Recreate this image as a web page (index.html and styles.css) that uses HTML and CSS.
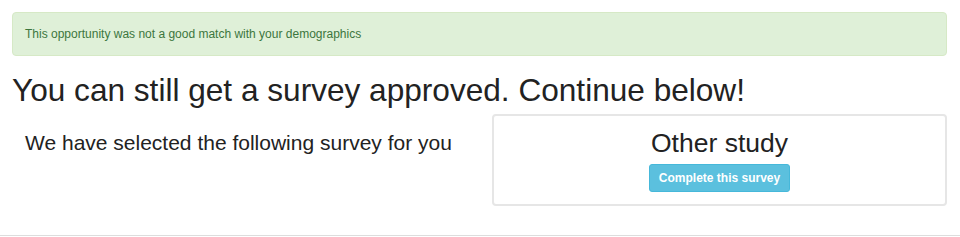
FILE: index.html
```html
<!doctype html>
<html lang="en">
<head>
    <meta charset="UTF-8">
    <meta name="viewport" content="width=device-width, initial-scale=1.0">
    <title>Survey</title>
    <link rel="stylesheet" href="styles.css">
</head>
<body>
<div class="page">
    <div class="alert">This opportunity was not a good match with your demographics</div>
    <h1>You can still get a survey approved. Continue below!</h1>
    <div class="row">
        <div class="col_left">
            <h4>We have selected the following survey for you</h4>
        </div>
        <div class="col_right">
            <div class="study">
                <h3>Other study</h3>
                <button class="btn_info">Complete this survey</button>
            </div>
        </div>
    </div>
</div>
<div class="footer_line"></div>
</body>
</html>
```

FILE: styles.css
```css
body {
    margin: 0;
    font-family: "Liberation Sans", Arial, sans-serif;
    color: #222;
    background-color: #fff;
}

.page {
    padding: 12px 13px 0 12px;
    height: 223px;
    box-sizing: border-box;
}

.alert {
    background-color: #dff0d8;
    border: 1px solid #d6e9c6;
    border-radius: 4px;
    color: #3c763d;
    font-size: 12px;
    height: 44px;
    box-sizing: border-box;
    padding: 0 12px;
    display: flex;
    align-items: center;
}

h1 {
    font-size: 31.6px;
    font-weight: normal;
    margin: 16px 0 6px;
    line-height: 36px;
}

.row {
    display: flex;
}

.col_left {
    width: 468px;
    padding-left: 13px;
    box-sizing: border-box;
}

.col_left h4 {
    font-size: 21px;
    font-weight: normal;
    line-height: 24px;
    margin: 17px 0 0;
}

.col_right {
    flex: 1;
    padding-left: 12px;
}

.study {
    border: 2px solid #e6e6e6;
    border-radius: 4px;
    height: 92px;
    box-sizing: border-box;
    text-align: center;
    padding-top: 12px;
}

.study h3 {
    font-size: 26.5px;
    font-weight: normal;
    margin: 0 0 6px;
    line-height: 30px;
}

.btn_info {
    background-color: #5bc0de;
    border: 1px solid #46b8da;
    border-radius: 3px;
    color: #fff;
    font-family: "Liberation Sans", Arial, sans-serif;
    font-weight: bold;
    font-size: 12px;
    width: 141px;
    height: 28px;
    padding: 0;
    cursor: pointer;
}

.footer_line {
    margin-top: 12px;
    border-top: 1px solid #ddd;
}
```
